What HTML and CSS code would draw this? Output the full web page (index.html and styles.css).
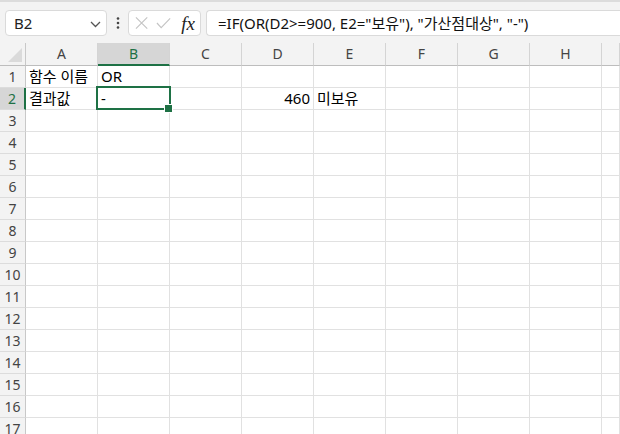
FILE: index.html
```html
<!DOCTYPE html>
<html lang="ko">
<head>
  <meta charset="UTF-8" />
  <title>Excel - OR</title>
  <link rel="stylesheet" href="styles.css">
</head>
<body>
  <!-- 수식 입력줄 -->
  <div class="toolbar">
    <div class="namebox">
      <span>B2</span>
      <svg class="chev" width="11" height="7" viewBox="0 0 11 7"><polyline points="1,1 5.5,5.5 10,1" fill="none" stroke="#555" stroke-width="1.3"/></svg>
    </div>
    <div class="dots">
      <svg width="4" height="12" viewBox="0 0 4 12"><circle cx="2" cy="1.5" r="1.3" fill="#444"/><circle cx="2" cy="6" r="1.3" fill="#444"/><circle cx="2" cy="10.5" r="1.3" fill="#444"/></svg>
    </div>
    <div class="fxbox">
      <svg width="14" height="14" viewBox="0 0 14 14"><path d="M1 1 L13 13 M13 1 L1 13" stroke="#c4c4c4" stroke-width="1.2" fill="none"/></svg>
      <svg width="16" height="12" viewBox="0 0 16 12"><polyline points="1,6 5.5,11 15,1" stroke="#c4c4c4" stroke-width="1.2" fill="none"/></svg>
      <span class="fx">fx</span>
    </div>
    <div class="formula">=IF(OR(D2&gt;=900, E2="보유"), "가산점대상", "-")</div>
  </div>

  <!-- 시트 -->
  <div class="sheet" id="sheet">
    <div class="corner"><span class="tri"></span></div>
    <div class="colhead">A</div>
    <div class="colhead sel">B</div>
    <div class="colhead">C</div>
    <div class="colhead">D</div>
    <div class="colhead">E</div>
    <div class="colhead">F</div>
    <div class="colhead">G</div>
    <div class="colhead">H</div>
    <div class="colhead"></div>

    <div class="rowhead">1</div>
    <div class="cell">함수 이름</div>
    <div class="cell">OR</div>
    <div class="cell"></div><div class="cell"></div><div class="cell"></div>
    <div class="cell"></div><div class="cell"></div><div class="cell"></div><div class="cell"></div>

    <div class="rowhead sel">2</div>
    <div class="cell">결과값</div>
    <div class="cell active">-</div>
    <div class="cell"></div>
    <div class="cell num">460</div>
    <div class="cell">미보유</div>
    <div class="cell"></div><div class="cell"></div><div class="cell"></div><div class="cell"></div>
  </div>

  <script>
    const sheet = document.getElementById("sheet");
    for (let r = 3; r <= 17; r++) {
      let html = `<div class="rowhead">${r}</div>`;
      for (let c = 0; c < 9; c++) html += `<div class="cell"></div>`;
      sheet.insertAdjacentHTML("beforeend", html);
    }
  </script>
</body>
</html>
```

FILE: styles.css
```css
* { box-sizing: border-box; }
body { margin: 0; background: #fff; font-family: "Noto Sans", "Noto Sans CJK KR", sans-serif; color: #000; overflow: hidden; }

.toolbar { height: 43px; background: #f3f3f3; border-top: 2px solid #dcdcdc; display: flex; align-items: flex-start; padding-top: 8px; white-space: nowrap; overflow: hidden; }
.namebox { margin-left: 5px; width: 102px; height: 26px; background: #fff; border: 1px solid #dadada; border-radius: 4px; display: flex; align-items: center; justify-content: space-between; padding: 0 5px 0 8px; font-size: 15px; color: #222; }
.namebox .chev { margin-top: 2px; }
.dots { width: 21px; height: 26px; display: flex; align-items: center; justify-content: center; }
.fxbox { width: 73px; height: 26px; background: #fff; border: 1px solid #dadada; border-radius: 4px; display: flex; align-items: center; padding: 0 5px 0 6px; gap: 8px; }
.fx { font-family: "Liberation Serif", serif; font-style: italic; font-size: 19px; color: #222; margin-left: 2px; line-height: 1; }
.formula { margin-left: 5px; flex: 1; height: 26px; background: #fff; border: 1px solid #dadada; border-right: none; border-radius: 4px 0 0 4px; padding-left: 11px; font-size: 15px; line-height: 24px; color: #111; }

.sheet { display: grid; grid-template-columns: 26px repeat(8, 72px) 18px; grid-template-rows: 23px; grid-auto-rows: 22px; height: 391px; overflow: hidden; }
.corner { background: #f3f3f3; border-right: 1px solid #c8c8c8; border-bottom: 1px solid #bdbdbd; position: relative; }
.tri { position: absolute; right: 3px; bottom: 3px; width: 0; height: 0; border-left: 14px solid transparent; border-bottom: 14px solid #dadada; }
.colhead { background: #f3f3f3; border-right: 1px solid #d4d4d4; border-bottom: 1px solid #bdbdbd; text-align: center; font-size: 14px; line-height: 22px; color: #444; }
.colhead.sel { background: #d6d6d6; border-bottom: 2px solid #1e7145; color: #1e7145; }
.rowhead { background: #f3f3f3; border-right: 1px solid #c8c8c8; border-bottom: 1px solid #dcdcdc; text-align: center; font-size: 14px; line-height: 21px; color: #444; }
.rowhead.sel { background: #d6d6d6; border-right: 2px solid #1e7145; color: #1e7145; }
.cell { border-right: 1px solid #e1e1e1; border-bottom: 1px solid #e1e1e1; font-size: 15px; line-height: 21px; padding: 0 3px; white-space: nowrap; position: relative; }
.cell.num { text-align: right; }
.cell.active::after { content: ""; position: absolute; left: -2px; top: -2px; right: -2px; bottom: -1px; border: 2px solid #1e7145; }
.cell.active::before { content: ""; position: absolute; right: -4px; bottom: -4px; width: 7px; height: 7px; background: #1e7145; border: 1px solid #fff; z-index: 1; }
```
